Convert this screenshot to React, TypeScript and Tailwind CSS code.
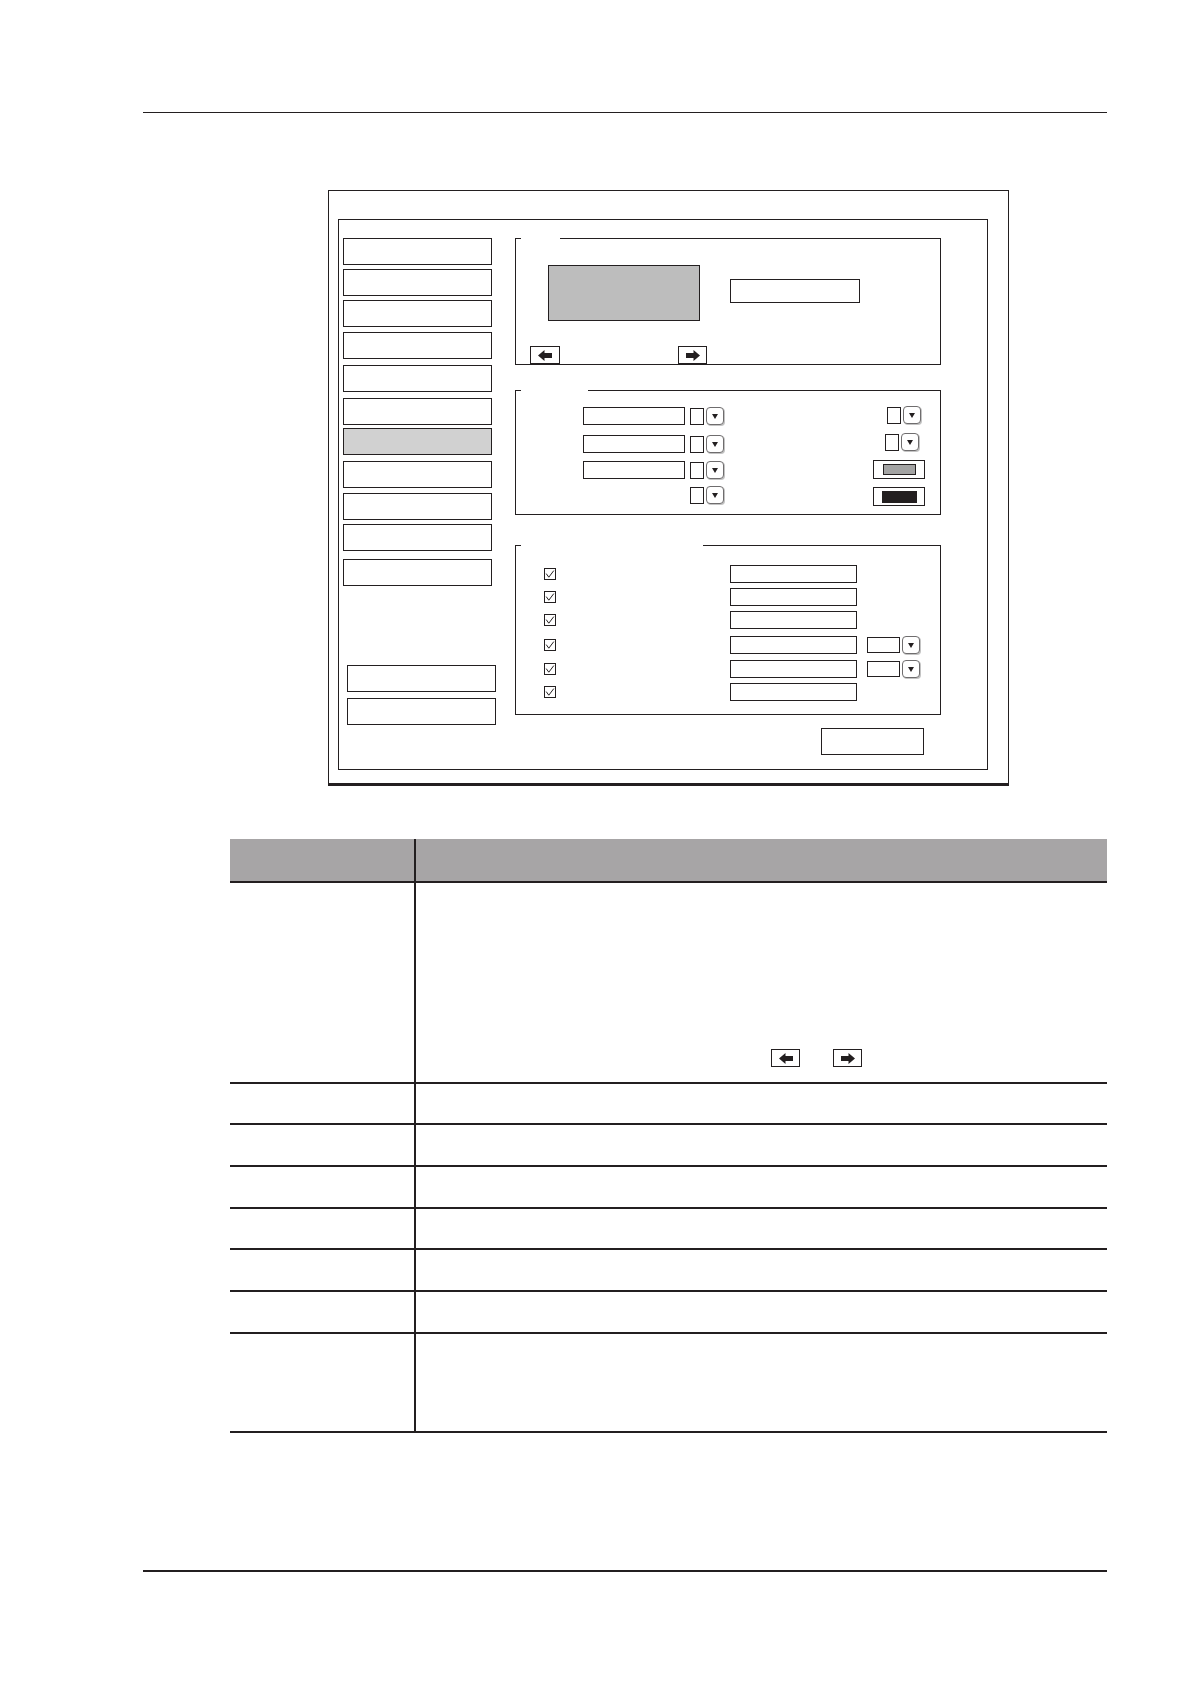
const ink = 'border-[#231f20]';

function Arrow({ dir }: { dir: 'left' | 'right' }) {
  const d = dir === 'left' ? 'M0 5.5L6.5 0V3H14V8H6.5V11Z' : 'M14 5.5L7.5 0V3H0V8H7.5V11Z';
  return (
    <svg width="14" height="11" viewBox="0 0 14 11">
      <path d={d} fill="#231f20" />
    </svg>
  );
}

function ArrowButton({ dir, className }: { dir: 'left' | 'right'; className: string }) {
  return (
    <div className={`flex h-[18px] items-center justify-center border ${ink} bg-white ${className}`}>
      <Arrow dir={dir} />
    </div>
  );
}

function Spinner({ boxClass, className = '' }: { boxClass: string; className?: string }) {
  return (
    <div className={`flex items-center ${className}`}>
      <div className={`border ${ink} bg-white ${boxClass}`} />
      <div className="ml-[2px] flex h-[18px] w-[18px] items-center justify-center rounded-[4px] border border-[#6f6d6e] bg-white shadow-[1px_1px_0_#c4c4c4]">
        <svg width="6" height="5" viewBox="0 0 6 5">
          <path d="M0 0H6L3 5Z" fill="#231f20" />
        </svg>
      </div>
    </div>
  );
}

function Check() {
  return (
    <div className={`flex h-[12px] w-[12px] items-center justify-center border ${ink}`}>
      <svg width="10" height="10" viewBox="0 0 10 10">
        <path d="M1.2 4.6L3.8 8.2L8.8 1.6" fill="none" stroke="#231f20" strokeWidth="1" />
      </svg>
    </div>
  );
}

function Group({ height, legend, children }: { height: string; legend: string; children: React.ReactNode }) {
  return (
    <fieldset className={`m-0 w-[426px] border ${ink} p-0 ${height}`}>
      <legend className={`ml-[5px] h-0 p-0 ${legend}`} />
      {children}
    </fieldset>
  );
}

const sideButtons = ['mt-0', 'mt-[4px]', 'mt-[4px]', 'mt-[5px]', 'mt-[6px]', 'mt-[6px]', 'mt-[3px]', 'mt-[6px]', 'mt-[5px]', 'mt-[4px]', 'mt-[8px]'];

const optionRows = [
  { mt: 'mt-[19px]', spin: false },
  { mt: 'mt-[5px]', spin: false },
  { mt: 'mt-[5px]', spin: false },
  { mt: 'mt-[7px]', spin: true },
  { mt: 'mt-[6px]', spin: true },
  { mt: 'mt-[5px]', spin: false },
];

const tableRows = ['h-[41px]', 'h-[42px]', 'h-[42px]', 'h-[41px]', 'h-[42px]', 'h-[42px]', 'h-[99px]'];

export default function App() {
  return (
    <div className="flex h-[1684px] w-[1191px] flex-col bg-white font-['Liberation_Sans',sans-serif]">
      <div className="ml-[143px] mt-[112px] h-px w-[964px] bg-[#231f20]" />

      {/* screen figure */}
      <div className={`ml-[328px] mt-[77px] h-[596px] w-[681px] border border-b-[3px] ${ink}`}>
        <div className={`ml-[9px] mt-[28px] flex h-[551px] w-[650px] border ${ink}`}>
          <div className="flex w-[157px] flex-col pl-[4px] pt-[18px]">
            {sideButtons.map((mt, i) => (
              <div
                key={i}
                className={`h-[27px] w-[149px] border ${ink} ${mt} ${i === 6 ? 'bg-[#d1d1d1]' : 'bg-white'}`}
              />
            ))}
            <div className={`ml-[4px] mt-[79px] h-[27px] w-[149px] border ${ink}`} />
            <div className={`ml-[4px] mt-[6px] h-[27px] w-[149px] border ${ink}`} />
          </div>

          <div className="ml-[19px] flex w-[426px] flex-col pt-[18px]">
            <Group height="h-[127px]" legend="w-[39px]">
              <div className="flex items-start pl-[32px] pt-[26px]">
                <div className={`h-[56px] w-[152px] border ${ink} bg-[#bdbdbd]`} />
                <div className={`ml-[30px] mt-[14px] h-[24px] w-[130px] border ${ink}`} />
              </div>
              <div className="mt-[25px] flex pl-[14px]">
                <ArrowButton dir="left" className="w-[30px]" />
                <ArrowButton dir="right" className="ml-[118px] w-[29px]" />
              </div>
            </Group>

            <div className="mt-[25px]">
              <Group height="h-[125px]" legend="w-[67px]">
                <div className="flex justify-between">
                  <div className="flex flex-col pl-[67px] pt-[16px]">
                    <div className="flex h-[18px] items-center">
                      <div className={`h-[18px] w-[102px] border ${ink}`} />
                      <Spinner boxClass="h-[17px] w-[14px]" className="ml-[5px]" />
                    </div>
                    <div className="mt-[10px] flex h-[18px] items-center">
                      <div className={`h-[18px] w-[102px] border ${ink}`} />
                      <Spinner boxClass="h-[17px] w-[14px]" className="ml-[5px]" />
                    </div>
                    <div className="mt-[8px] flex h-[18px] items-center">
                      <div className={`h-[18px] w-[102px] border ${ink}`} />
                      <Spinner boxClass="h-[17px] w-[14px]" className="ml-[5px]" />
                    </div>
                    <div className="mt-[7px] flex h-[18px] items-center">
                      <Spinner boxClass="h-[17px] w-[14px]" className="ml-[107px]" />
                    </div>
                  </div>
                  <div className="flex flex-col items-end pt-[15px]">
                    <Spinner boxClass="h-[17px] w-[14px]" className="mr-[19px] h-[18px]" />
                    <Spinner boxClass="h-[17px] w-[14px]" className="mr-[21px] mt-[9px] h-[18px]" />
                    <div className={`mr-[15px] mt-[9px] flex h-[19px] w-[52px] items-center justify-center border ${ink}`}>
                      <div className={`h-[11px] w-[33px] border ${ink} bg-[#a3a3a3]`} />
                    </div>
                    <div className={`mr-[15px] mt-[8px] flex h-[19px] w-[52px] items-center justify-center border ${ink}`}>
                      <div className="h-[12px] w-[35px] bg-[#231f20]" />
                    </div>
                  </div>
                </div>
              </Group>
            </div>

            <div className="mt-[30px]">
              <Group height="h-[170px]" legend="w-[182px]">
                {optionRows.map((row, i) => (
                  <div key={i} className={`flex h-[18px] items-center pl-[28px] ${row.mt}`}>
                    <Check />
                    <div className={`ml-[174px] h-[18px] w-[127px] border ${ink}`} />
                    {row.spin ? <Spinner boxClass="h-[16px] w-[33px]" className="ml-[10px]" /> : null}
                  </div>
                ))}
              </Group>
            </div>

            <div className={`mr-[17px] mt-[13px] h-[27px] w-[103px] self-end border ${ink}`} />
          </div>
        </div>
      </div>

      {/* description table */}
      <div className="ml-[230px] mt-[53px] flex w-[877px] flex-col">
        <div className="flex h-[44px] border-b-2 border-[#231f20] bg-[#a7a5a6]">
          <div className="w-[186px] border-r-2 border-[#231f20]" />
          <div className="flex-1" />
        </div>
        <div className="flex h-[201px] border-b-2 border-[#231f20]">
          <div className="w-[186px] border-r-2 border-[#231f20]" />
          <div className="flex flex-1 items-start pl-[355px] pt-[166px]">
            <ArrowButton dir="left" className="w-[29px]" />
            <ArrowButton dir="right" className="ml-[33px] w-[29px]" />
          </div>
        </div>
        {tableRows.map((h, i) => (
          <div key={i} className={`flex border-b-2 border-[#231f20] ${h}`}>
            <div className="w-[186px] border-r-2 border-[#231f20]" />
            <div className="flex-1" />
          </div>
        ))}
      </div>

      <div className="ml-[143px] mt-[137px] h-[2px] w-[964px] bg-[#231f20]" />
    </div>
  );
}
